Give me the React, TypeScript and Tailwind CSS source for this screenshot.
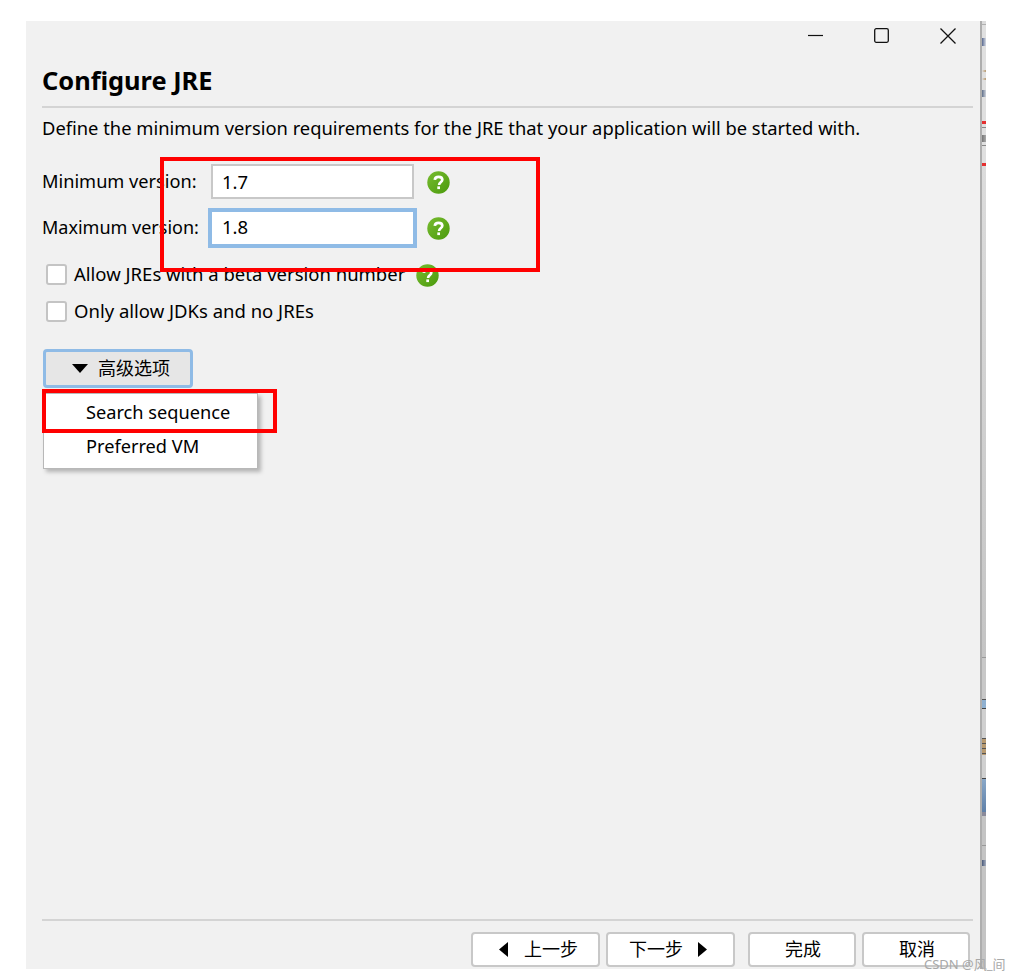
import type { ReactNode } from 'react';

const font = 'font-["Noto_Sans","Noto_Sans_CJK_SC",sans-serif]';

function Help({ className = '' }: { className?: string }) {
  return (
    <svg width="23" height="23" viewBox="0 0 23 23" className={className}>
      <defs>
        <linearGradient id="helpGreen" x1="0" y1="0" x2="1" y2="1">
          <stop offset="0" stopColor="#78bc30" />
          <stop offset="1" stopColor="#4a9a0c" />
        </linearGradient>
      </defs>
      <circle cx="11.5" cy="11.5" r="11.2" fill="url(#helpGreen)" />
      <path d="M7.800 8.800c.2-2 1.700-3 3.800-3 2.200 0 3.700 1.100 3.700 2.900 0 2.500-3.200 2.600-3.200 5.200" fill="none" stroke="#fff" strokeWidth="2.700" />
      <rect x="10.300" y="15.400" width="2.700" height="2.700" fill="#fff" />
    </svg>
  );
}

function Check({ label }: { label: string }) {
  return (
    <label className="flex items-center gap-[7px] text-[18.5px] leading-[24px] text-black">
      <span className="h-[21px] w-[21px] rounded-[3px] border-2 border-[#c4c4c4] bg-white" />
      {label}
    </label>
  );
}

function WizardButton({ className, children }: { className: string; children: ReactNode }) {
  return (
    <button className={`flex h-[35px] items-center rounded-[4px] border-2 border-[#c8c8c8] bg-white text-[18px] text-black ${className}`}>
      {children}
    </button>
  );
}

function Arrow({ dir }: { dir: 'left' | 'right' }) {
  return (
    <svg width="10" height="15" viewBox="0 0 10 15">
      <path d={dir === 'left' ? 'M9 0v15L0 7.500z' : 'M1 0v15L10 7.500z'} fill="#000" />
    </svg>
  );
}

// the window behind, only a sliver of it shows on the right
function BackgroundSliver() {
  return (
    <div className="flex h-[948px] w-[6px] flex-col border-l-2 border-[#aeaeae]">
      <div className="h-[3px] bg-[#dcdcdc]" />
      <div className="h-[1px] bg-[#b0b0b0]" />
      <div className="h-[13px] bg-[#e0e0e0]" />
      <div className="h-[8px] bg-gradient-to-r from-[#5a6a90] to-[#d8dce4]" />
      <div className="h-[24px] bg-[#e0e0e0]" />
      <div className="h-[2px] bg-gradient-to-r from-[#e0e0e0] to-[#b89a70]" />
      <div className="h-[6px] bg-[#e0e0e0]" />
      <div className="h-[2px] bg-gradient-to-r from-[#e0e0e0] to-[#b89a70]" />
      <div className="h-[10px] bg-[#e0e0e0]" />
      <div className="h-[7px] bg-gradient-to-r from-[#60708a] to-[#d0d4dc]" />
      <div className="h-[24px] bg-[#e0e0e0]" />
      <div className="h-[3px] bg-[#e53030]" />
      <div className="h-[3px] bg-[#e0e0e0]" />
      <div className="h-[1px] bg-[#888888]" />
      <div className="h-[7px] bg-[#e0e0e0]" />
      <div className="h-[7px] bg-gradient-to-r from-[#777777] to-[#aaaaaa]" />
      <div className="h-[3px] bg-[#e0e0e0]" />
      <div className="h-[1px] bg-[#888888]" />
      <div className="h-[17px] bg-[#e0e0e0]" />
      <div className="h-[3px] bg-[#e53030]" />
      <div className="h-[491px] bg-gradient-to-b from-[#dcdcdc] to-[#c4c4c4]" />
      <div className="h-[1px] bg-[#999999]" />
      <div className="h-[41px] bg-[#c8c8c8]" />
      <div className="h-[1px] bg-[#555555]" />
      <div className="h-[8px] bg-[#8fb0d0]" />
      <div className="h-[1px] bg-[#444444]" />
      <div className="h-[29px] bg-[#d0d0d0]" />
      <div className="h-[17px] bg-[repeating-linear-gradient(to_bottom,#555555_0,#555555_1px,#b89a70_1px,#b89a70_5px)]" />
      <div className="h-[23px] bg-[#d0d0d0]" />
      <div className="h-[1px] bg-[#444444]" />
      <div className="h-[33px] bg-gradient-to-b from-[#8aa8c8] to-[#5f80a8]" />
      <div className="h-[4px] bg-[#8a8a9a]" />
      <div className="h-[29px] bg-[#c4c4c4]" />
      <div className="h-[1px] bg-[#999999]" />
      <div className="h-[14px] bg-[#c4c4c4]" />
      <div className="h-[6px] bg-gradient-to-r from-[#4a5a7a] to-[#a8b0c0]" />
      <div className="flex-1 bg-[#c4c4c4]" />
    </div>
  );
}

export default function App() {
  return (
    <div className={`relative flex h-[980px] w-[1019px] overflow-hidden bg-white pl-[26px] pt-[21px] ${font}`}>
      <div className="relative flex h-[948px] w-[954px] flex-col bg-[#f1f1f1] pl-[16px] pr-[7px]">
        <div className="mr-[-7px] flex h-[29px] items-center justify-end gap-[51px] pr-[24px]">
          <svg width="15" height="15" viewBox="0 0 15 15"><path d="M0 7.500h15" stroke="#111" strokeWidth="1.200" /></svg>
          <svg width="15" height="15" viewBox="0 0 15 15"><rect x=".7" y=".7" width="13.600" height="13.600" rx="1.500" fill="none" stroke="#111" strokeWidth="1.300" /></svg>
          <svg width="16" height="16" viewBox="0 0 16 16"><path d="M.5.500l15 15M15.500.500l-15 15" stroke="#111" strokeWidth="1.300" /></svg>
        </div>

        <h1 className="mt-[14px] h-[44px] border-b-2 border-[#d4d4d4] text-[25.4px] font-bold leading-[33px] text-black">Configure JRE</h1>
        <p className="mt-[8px] text-[18.35px] leading-[24px] text-black">
          Define the minimum version requirements for the JRE that your application will be started with.
        </p>

        <div className="mt-[24px] flex h-[35px] items-center">
          <span className="w-[169px] text-[18.2px] text-black">Minimum version:</span>
          <input readOnly value="1.7" className="h-[35px] w-[203px] border-2 border-[#c8c8c8] bg-white px-[9px] text-[18.5px] text-black outline-none" />
          <Help className="ml-[13px] mt-[1px]" />
        </div>
        <div className="mt-[9px] flex h-[40px] items-center">
          <span className="w-[166px] pb-[2px] text-[18px] text-black">Maximum version:</span>
          <input readOnly value="1.8" className="h-[40px] w-[209px] border-[4px] border-[#8fbbe6] bg-white px-[10px] pb-[3px] text-[18.5px] text-black outline-none" />
          <Help className="ml-[10px] mt-[1px]" />
        </div>

        <div className="ml-[4px] mt-[14px] flex h-[24px] items-center gap-[11px]">
          <Check label="Allow JREs with a beta version number" />
          <Help className="mt-[2px]" />
        </div>
        <div className="ml-[4px] mt-[13px] flex h-[24px] items-center">
          <Check label="Only allow JDKs and no JREs" />
        </div>

        <button className="ml-[1px] mt-[26px] flex h-[39px] w-[150px] items-center gap-[10px] rounded-[4px] border-[3px] border-[#8fbbe6] bg-[#e6e6e6] pl-[26px] text-[18px] text-black">
          <svg width="16" height="9" viewBox="0 0 16 9"><path d="M0 0h16L8 9z" fill="#000" /></svg>
          高级选项
        </button>

        <div className="ml-[1px] mt-[5px] flex h-[76px] w-[215px] flex-col border border-[#b8b8b8] bg-white pl-[42px] pt-[1px] text-[18.2px] leading-[34px] text-black shadow-[3px_3px_4px_rgba(0,0,0,0.25)]">
          <span>Search sequence</span>
          <span>Preferred VM</span>
        </div>

        <div className="mt-auto flex h-[50px] flex-col border-t-2 border-[#d4d4d4]">
          <div className="ml-[429px] mt-[11px] flex">
            <WizardButton className="w-[129px] gap-[15px] pl-[26px]"><Arrow dir="left" />上一步</WizardButton>
            <WizardButton className="ml-[6px] w-[129px] gap-[14px] pl-[21px]">下一步<Arrow dir="right" /></WizardButton>
            <WizardButton className="ml-[13px] w-[108px] justify-center pl-[2px]">完成</WizardButton>
            <WizardButton className="ml-[6px] w-[108px] justify-center pl-[2px]">取消</WizardButton>
          </div>
        </div>

        <div className="pointer-events-none absolute left-[134px] top-[136px] h-[115px] w-[380px] border-[4px] border-[#ff0000]" />
        <div className="pointer-events-none absolute left-[16px] top-[368px] h-[44px] w-[235px] border-[4px] border-[#ff0000]" />
      </div>

      <BackgroundSliver />

      <span className="absolute left-[924px] top-[956px] text-[13px] leading-[16px] text-[#a8a8a8]">CSDN @风_间</span>
    </div>
  );
}
